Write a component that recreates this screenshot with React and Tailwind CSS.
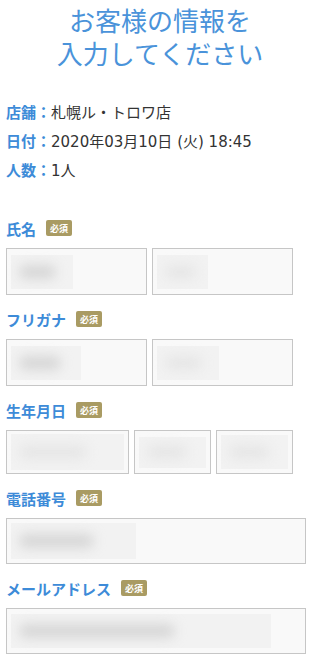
const font = { fontFamily: '"Noto Sans CJK JP", "Noto Sans", sans-serif' };
const infoFont = { fontFamily: '"DejaVu Sans", "Noto Sans CJK JP", sans-serif' };

function Badge() {
  return (
    <span className="ml-[10px] inline-flex h-[16px] w-[26px] items-center justify-center rounded-[2px] bg-[#a99b63] text-[9px] font-bold leading-none text-white">
      必須
    </span>
  );
}

function FieldLabel({ children }) {
  return (
    <div className="mb-[10px] flex h-[20px] items-center">
      <span className="text-[15px] font-bold leading-none text-[#3d8bd8]">{children}</span>
      <Badge />
    </div>
  );
}

// blurred placeholder of the filled-in value
function Blur({ w, h, dark }) {
  return (
    <div className="flex items-center bg-[#f2f2f2]" style={{ width: w, height: h }}>
      <div className={`ml-[8px] h-[14px] w-[60%] rounded-full blur-[6px] ${dark ? "bg-[#d6d6d6]" : "bg-[#e6e6e6]"}`} />
    </div>
  );
}

function Box({ className, children }) {
  return (
    <div className={`flex items-center border border-[#c6c6c6] bg-[#f9f9f9] px-[4px] ${className}`}>
      {children}
    </div>
  );
}

export default function App() {
  return (
    <div className="min-h-[658px] w-[320px] bg-white pl-[6px] pt-[3px]" style={font}>
      {/* title */}
      <h1 className="pr-[6px] text-center text-[26px] font-normal leading-[33px] text-[#4a93da]">
        <span className="block">お客様の情報を</span>
        <span className="block">入力してください</span>
      </h1>

      {/* reservation info */}
      <div className="mt-[29px] text-[15px] leading-[28px] text-[#333]" style={infoFont}>
        <p>
          <span className="font-bold text-[#3d8bd8]" style={font}>店舗：</span>札幌ル・トロワ店
        </p>
        <p>
          <span className="font-bold text-[#3d8bd8]" style={font}>日付：</span>2020年03月10日 (火) 18:45
        </p>
        <p>
          <span className="font-bold text-[#3d8bd8]" style={font}>人数：</span>1人
        </p>
      </div>

      {/* 氏名 */}
      <div className="mt-[33px]">
        <FieldLabel>氏名</FieldLabel>
        <div className="grid w-[287px] grid-cols-2 gap-[5px]">
          <Box className="h-[47px]"><Blur w={62} h={34} dark /></Box>
          <Box className="h-[47px]"><Blur w={51} h={34} /></Box>
        </div>
      </div>

      {/* フリガナ */}
      <div className="mt-[14px]">
        <FieldLabel>フリガナ</FieldLabel>
        <div className="grid w-[287px] grid-cols-2 gap-[5px]">
          <Box className="h-[47px]"><Blur w={70} h={34} dark /></Box>
          <Box className="h-[47px]"><Blur w={62} h={34} /></Box>
        </div>
      </div>

      {/* 生年月日 */}
      <div className="mt-[14px]">
        <FieldLabel>生年月日</FieldLabel>
        <div className="flex w-[287px] gap-[5px]">
          <Box className="h-[44px] w-[123px]"><Blur w={113} h={36} /></Box>
          <Box className="h-[44px] w-[77px]"><Blur w={67} h={31} /></Box>
          <Box className="h-[44px] w-[77px]"><Blur w={67} h={34} /></Box>
        </div>
      </div>

      {/* 電話番号 */}
      <div className="mt-[14px]">
        <FieldLabel>電話番号</FieldLabel>
        <Box className="h-[46px] w-[300px]"><Blur w={125} h={36} dark /></Box>
      </div>

      {/* メールアドレス */}
      <div className="mt-[14px]">
        <FieldLabel>メールアドレス</FieldLabel>
        <Box className="h-[46px] w-[300px]"><Blur w={260} h={34} dark /></Box>
      </div>
    </div>
  );
}
